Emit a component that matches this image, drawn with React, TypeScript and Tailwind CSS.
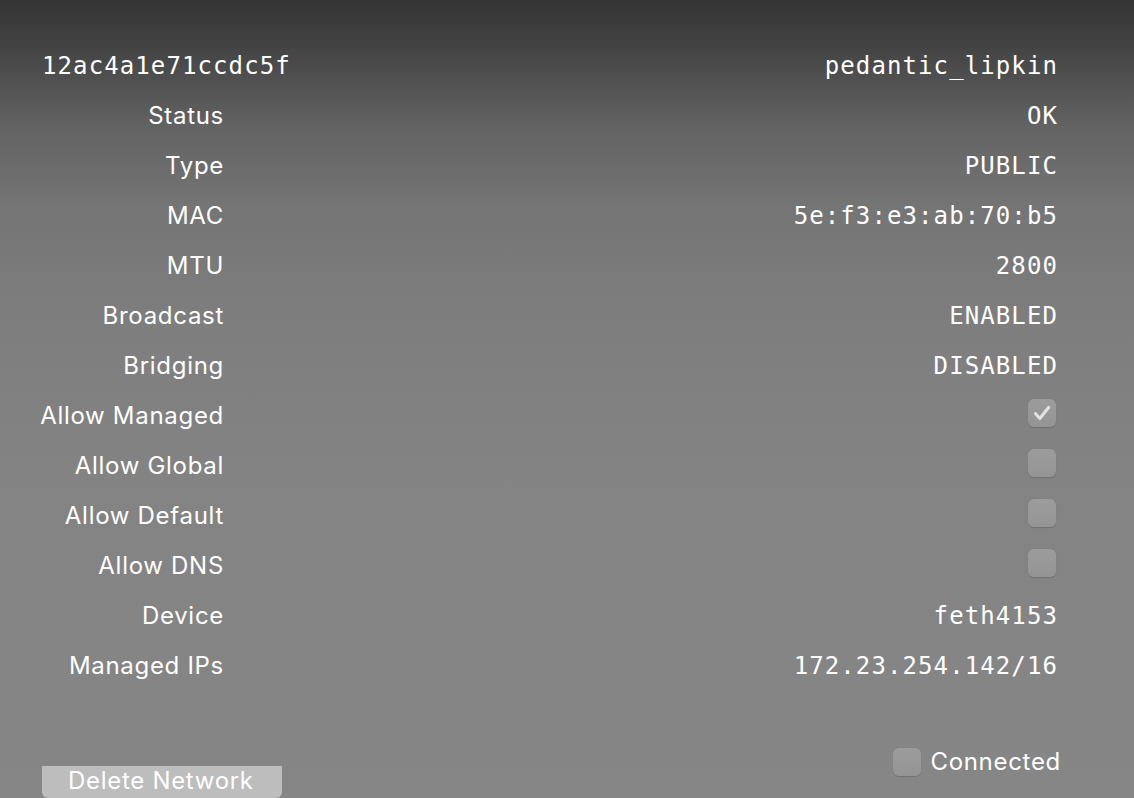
import React from 'react';

const rows: { label: string; value?: string; check?: boolean }[] = [
  { label: 'Status', value: 'OK' },
  { label: 'Type', value: 'PUBLIC' },
  { label: 'MAC', value: '5e:f3:e3:ab:70:b5' },
  { label: 'MTU', value: '2800' },
  { label: 'Broadcast', value: 'ENABLED' },
  { label: 'Bridging', value: 'DISABLED' },
  { label: 'Allow Managed', check: true },
  { label: 'Allow Global', check: false },
  { label: 'Allow Default', check: false },
  { label: 'Allow DNS', check: false },
  { label: 'Device', value: 'feth4153' },
  { label: 'Managed IPs', value: '172.23.254.142/16' },
];

const mono = "font-['DejaVu_Sans_Mono',monospace] text-[24px] tracking-[1.1px] whitespace-nowrap";
const sans = "font-['Inter',sans-serif] text-[24px] tracking-[0.7px] whitespace-nowrap";

const Box = ({ checked }: { checked: boolean }) => (
  <div className="w-[28px] h-[28px] rounded-[6px] bg-gradient-to-b from-[#9c9c9c] to-[#949494] shadow-[0_0.5px_1px_rgba(0,0,0,0.15)] flex items-center justify-center">
    {checked && (
      <svg width="22" height="22" viewBox="0 0 20 20" fill="none">
        <path d="M4 10.5l4 4.5 8-10" stroke="#e2e2e2" strokeWidth="2.8" strokeLinecap="round" strokeLinejoin="round" />
      </svg>
    )}
  </div>
);

export default function App() {
  return (
    <div className="h-[798px] w-full overflow-hidden flex flex-col text-white bg-[linear-gradient(180deg,#343434_0%,#4a4a4a_8%,#636363_16%,#757575_26%,#7e7e7e_40%,#838383_60%,#868686_100%)]">
      <div className="pt-[41px] pl-[42px] pr-[76px] flex flex-col">
        <div className="h-[50px] flex items-center justify-between">
          <span className={mono}>12ac4a1e71ccdc5f</span>
          <span className={mono}>pedantic_lipkin</span>
        </div>
        {rows.map((r) => (
          <div key={r.label} className="h-[50px] grid grid-cols-[182px_1fr] items-center">
            <div className="flex justify-end">
              <span className={sans}>{r.label}</span>
            </div>
            <div className="flex justify-end">
              {r.value !== undefined ? (
                <span className={mono}>{r.value}</span>
              ) : (
                <div className="mr-[2px] -mt-[6px]">
                  <Box checked={!!r.check} />
                </div>
              )}
            </div>
          </div>
        ))}
      </div>
      <div className="flex-1" />
      <div className="flex items-end justify-between pl-[42px] pr-[73px]">
        <button className="w-[240px] h-[32px] bg-[#bdbdbe] rounded-b-[6px] flex items-start pl-[26px]">
          <span className={`${sans} text-white leading-[30px]`}>Delete Network</span>
        </button>
        <div className="flex items-center gap-[9px] mb-[18px]">
          <Box checked={false} />
          <span className={sans}>Connected</span>
        </div>
      </div>
    </div>
  );
}
